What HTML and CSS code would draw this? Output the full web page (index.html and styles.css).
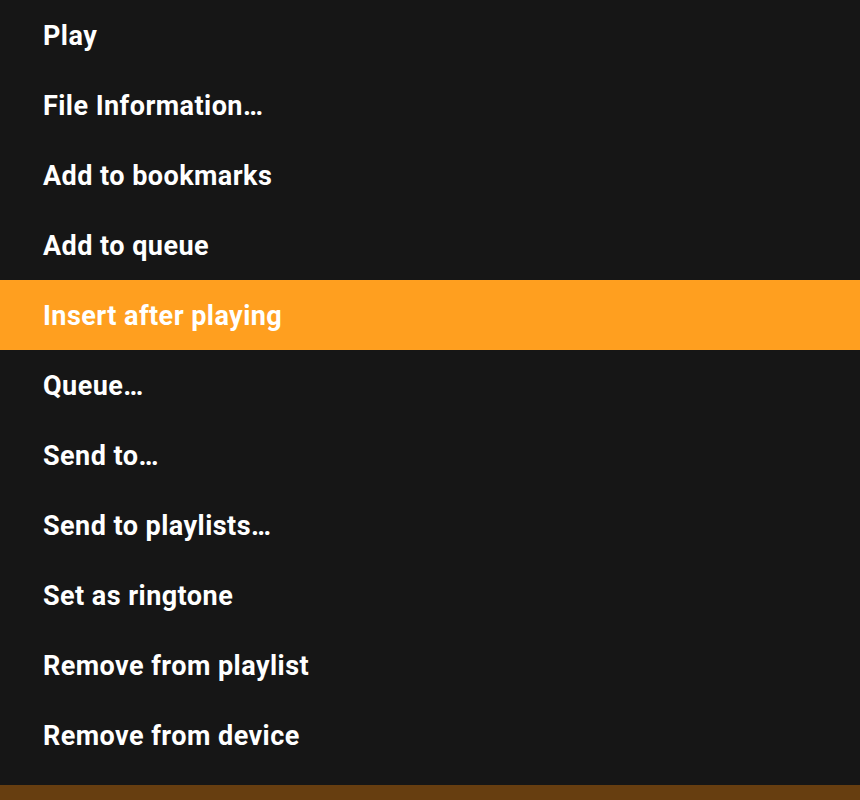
FILE: index.html
```html
<!DOCTYPE html>
<html>
<head>
<meta charset="utf-8">
<link rel="stylesheet" href="styles.css">
</head>
<body>
<div class="menu">
  <div class="item">Play</div>
  <div class="item">File Information…</div>
  <div class="item">Add to bookmarks</div>
  <div class="item">Add to queue</div>
  <div class="item active">Insert after playing</div>
  <div class="item">Queue…</div>
  <div class="item">Send to…</div>
  <div class="item">Send to playlists…</div>
  <div class="item">Set as ringtone</div>
  <div class="item">Remove from playlist</div>
  <div class="item">Remove from device</div>
</div>
<div class="spacer"></div>
<div class="bar"></div>
</body>
</html>
```
FILE: styles.css
```css
html, body {
  margin: 0;
  padding: 0;
  background: #161616;
  width: 860px;
  height: 800px;
  overflow: hidden;
  font-family: Roboto, "Liberation Sans", sans-serif;
}
.menu {
  display: flex;
  flex-direction: column;
}
.item {
  box-sizing: border-box;
  height: 70px;
  display: flex;
  align-items: center;
  padding-left: 43px;
  padding-top: 2px;
  color: #ffffff;
  font-size: 27px;
  letter-spacing: 0.45px;
  font-weight: 700;
}
.item.active {
  background: #ff9f1f;
}
.spacer {
  height: 15px;
}
.bar {
  height: 15px;
  background: #673e10;
}
```
